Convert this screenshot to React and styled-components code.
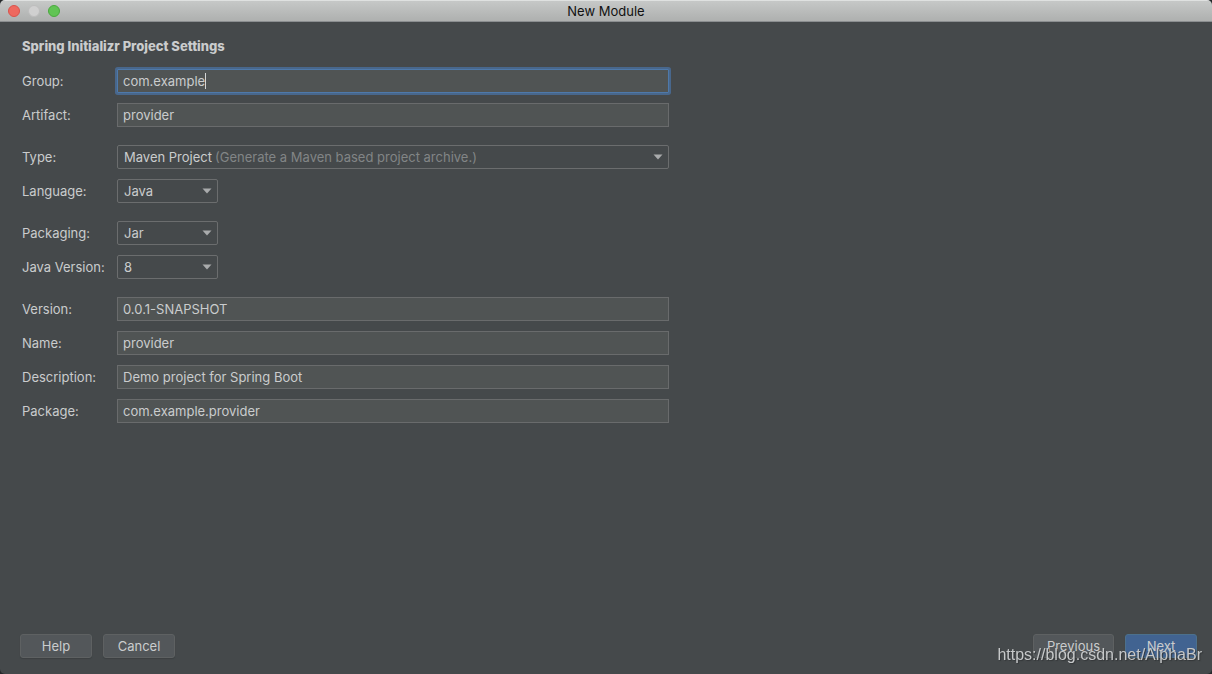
import { useState } from 'react';
import styled, { createGlobalStyle } from 'styled-components';

const GlobalStyle = createGlobalStyle`
    * {
        box-sizing: border-box;
    }

    body {
        margin: 0;
        background-color: #25282a;
        font-family: Inter, "Liberation Sans", sans-serif;
        font-size: 13px;
        line-height: 16px;
        color: #cacccd;
    }
`

const Window = styled.div`
    min-height: 100vh;
    display: flex;
    flex-direction: column;
    background-color: #45494b;
    border-radius: 5px;
    overflow: hidden;
`

const TitleBar = styled.header`
    height: 22px;
    padding: 0px 8px;
    display: grid;
    grid-template-columns: 1fr auto 1fr;
    align-items: center;
    background: linear-gradient(#c6c8c7, #aeb0af);
    border-top: 1px solid #dfe1e0;
    border-bottom: 1px solid #8b8e90;
`

const Lights = styled.div`
    display: flex;
    gap: 8px;
`

const Light = styled.button`
    width: 12px;
    height: 12px;
    padding: 0px;
    border: 1px solid ${({ $edge }) => $edge};
    border-radius: 50%;
    background-color: ${({ $color }) => $color};
`

const WindowTitle = styled.h1`
    margin: 0px;
    font-size: 13px;
    font-weight: 400;
    line-height: 18px;
    color: #111;
`

const Form = styled.form`
    flex: 1;
    display: flex;
    flex-direction: column;
    padding: 16px 15px 16px 20px;
`

const Settings = styled.section`
    max-width: 649px;
    padding-left: 2px;
`

const Heading = styled.h2`
    margin: 0px 0px 15px;
    font-size: 13px;
    font-weight: 800;
`

const Group = styled.div`
    display: flex;
    flex-direction: column;
    gap: 10px;
    margin-bottom: 18px;
`

const Row = styled.div`
    display: grid;
    grid-template-columns: 95px 1fr;
    align-items: center;
`

const Field = styled.div`
    display: grid;
    align-items: center;

    > * {
        grid-area: 1 / 1;
    }
`

const TextInput = styled.input`
    width: 100%;
    height: 24px;
    padding: 0px 5px;
    border: 1px solid #696b6c;
    border-radius: 0px;
    outline: none;
    background-color: #505454;
    color: inherit;
    font: inherit;

    &.active {
        border-color: #4e79aa;
        box-shadow: 0px 0px 0px 2px #48678c;
        border-radius: 1px;
        caret-color: transparent;
    }
`

const Caret = styled.span`
    width: 1px;
    height: 16px;
    margin-left: 88px;
    background-color: #d4d6d6;
    pointer-events: none;
`

const Select = styled.select`
    width: ${({ $wide }) => ($wide ? '100%' : '101px')};
    height: 24px;
    padding: 0px 24px 0px 6px;
    appearance: none;
    border: 1px solid #6b6d6e;
    border-radius: 2px;
    background-color: transparent;
    color: inherit;
    font: inherit;

    option {
        background-color: #45494b;
    }
`

const Hint = styled.span`
    padding-left: 98px;
    color: #828586;
    pointer-events: none;
    white-space: nowrap;
`

const Arrow = styled.svg`
    width: 10px;
    height: 6px;
    justify-self: ${({ $wide }) => ($wide ? 'end' : 'start')};
    margin: ${({ $wide }) => ($wide ? '0px 6px 0px 0px' : '0px 0px 0px 85px')};
    fill: #a9abac;
    pointer-events: none;
`

const Footer = styled.footer`
    margin-top: auto;
    display: flex;
    gap: 11px;
`

const Button = styled.button`
    min-width: 72px;
    height: 24px;
    padding: 0px 13px;
    border: 1px solid ${({ $primary }) => ($primary ? '#4c708c' : '#5e6162')};
    border-radius: 3px;
    background-color: ${({ $primary }) => ($primary ? '#416391' : '#53575a')};
    box-shadow: 0px 1px 1px #3c4042;
    color: inherit;
    font: inherit;
`

const Spacer = styled.div`
    flex: 1;
`

const Watermark = styled.div`
    position: fixed;
    right: 10px;
    bottom: 10px;
    font-family: "Liberation Sans", Arial, sans-serif;
    font-size: 16px;
    line-height: 18px;
    color: #c6c8c9;
    text-shadow: 1px 1px 1px #333638;
    pointer-events: none;
`

const groups = [
    [
        { id: 'group', label: 'Group:' },
        { id: 'artifact', label: 'Artifact:' },
    ],
    [
        { id: 'type', label: 'Type:', options: ['Maven Project'], hint: '(Generate a Maven based project archive.)' },
        { id: 'language', label: 'Language:', options: ['Java', 'Kotlin', 'Groovy'] },
    ],
    [
        { id: 'packaging', label: 'Packaging:', options: ['Jar', 'War'] },
        { id: 'javaVersion', label: 'Java Version:', options: ['8', '11'] },
    ],
    [
        { id: 'version', label: 'Version:' },
        { id: 'name', label: 'Name:' },
        { id: 'description', label: 'Description:' },
        { id: 'package', label: 'Package:' },
    ],
];

function SettingRow({ field, value, active, onChange }) {
    const { id, label, options, hint } = field;
    const wide = Boolean(hint);

    return (
        <Row>
            <label htmlFor={id}>{label}</label>
            <Field>
                {options ? (
                    <>
                        <Select id={id} $wide={wide} value={value} onChange={(e) => onChange(id, e.target.value)}>
                            {options.map((option) => <option key={option}>{option}</option>)}
                        </Select>
                        {hint && <Hint>{hint}</Hint>}
                        <Arrow $wide={wide} viewBox="0 0 10 6" aria-hidden="true">
                            <path d="M0.5 0.5h9L5 5.5z" />
                        </Arrow>
                    </>
                ) : (
                    <>
                        <TextInput
                            id={id}
                            className={active ? 'active' : ''}
                            value={value}
                            onChange={(e) => onChange(id, e.target.value)}
                        />
                        {active && <Caret />}
                    </>
                )}
            </Field>
        </Row>
    );
}

export default function App() {
    const [values, setValues] = useState({
        group: 'com.example',
        artifact: 'provider',
        type: 'Maven Project',
        language: 'Java',
        packaging: 'Jar',
        javaVersion: '8',
        version: '0.0.1-SNAPSHOT',
        name: 'provider',
        description: 'Demo project for Spring Boot',
        package: 'com.example.provider',
    });

    function changeValue(id, value) {
        setValues({ ...values, [id]: value });
    }

    return (
        <>
            <GlobalStyle />
            <Window>
                <TitleBar>
                    <Lights>
                        <Light aria-label="Close" $color="#ee695f" $edge="#d9534c" />
                        <Light aria-label="Minimize" $color="#d0d0d0" $edge="#bdbdbd" />
                        <Light aria-label="Zoom" $color="#61c454" $edge="#4aa93e" />
                    </Lights>
                    <WindowTitle>New Module</WindowTitle>
                </TitleBar>
                <Form onSubmit={(e) => e.preventDefault()}>
                    <Settings>
                        <Heading>Spring Initializr Project Settings</Heading>
                        {groups.map((group, index) => (
                            <Group key={'group' + index}>
                                {group.map((field) => (
                                    <SettingRow
                                        key={field.id}
                                        field={field}
                                        value={values[field.id]}
                                        active={field.id === 'group'}
                                        onChange={changeValue}
                                    />
                                ))}
                            </Group>
                        ))}
                    </Settings>
                    <Footer>
                        <Button type="button">Help</Button>
                        <Button type="button">Cancel</Button>
                        <Spacer />
                        <Button type="button">Previous</Button>
                        <Button type="submit" $primary>Next</Button>
                    </Footer>
                </Form>
            </Window>
            <Watermark>https://blog.csdn.net/AlphaBr</Watermark>
        </>
    );
}
